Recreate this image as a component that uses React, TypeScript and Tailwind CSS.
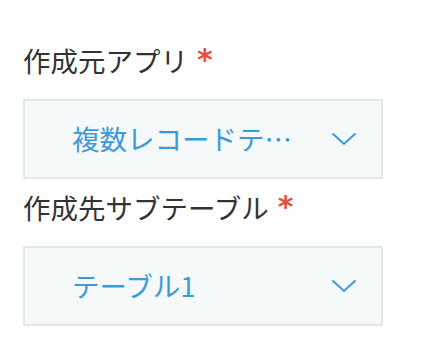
import React from "react";

const font = { fontFamily: '"Noto Sans CJK JP", "Noto Sans", sans-serif' };

function Chevron() {
  return (
    <svg width="26" height="14" viewBox="0 0 26 14" fill="none" className="shrink-0">
      <path d="M1.5 1.5 L13 12 L24.5 1.5" stroke="#3d9ad9" strokeWidth="2" />
    </svg>
  );
}

function Field({ label, value }: { label: string; value: string }) {
  return (
    <div className="flex flex-col">
      <div className="flex h-[57px] items-center text-[27.5px] text-[#333333]">
        <span>{label}</span>
        <span
          className="ml-[9px] self-start mt-[13px] text-[30px] font-bold leading-[30px] text-[#e5503e]"
          style={{ fontFamily: '"DejaVu Sans", sans-serif' }}
        >
          *
        </span>
      </div>
      <div className="mt-[10px] flex h-[80px] w-[360px] items-center border-2 border-[#e3e7e8] bg-[#f5f9fa] pl-[47px] pr-[24px]">
        <span className="min-w-0 flex-1 truncate pr-[14px] text-[27.5px] text-[#3d9ad9]">
          {value}
        </span>
        <Chevron />
      </div>
    </div>
  );
}

export default function App() {
  return (
    <div className="h-[357px] w-[432px] bg-white pl-[23px] pt-[32px]" style={font}>
      <Field label="作成元アプリ" value="複数レコードテーブル" />
      <Field label="作成先サブテーブル" value="テーブル1" />
    </div>
  );
}
